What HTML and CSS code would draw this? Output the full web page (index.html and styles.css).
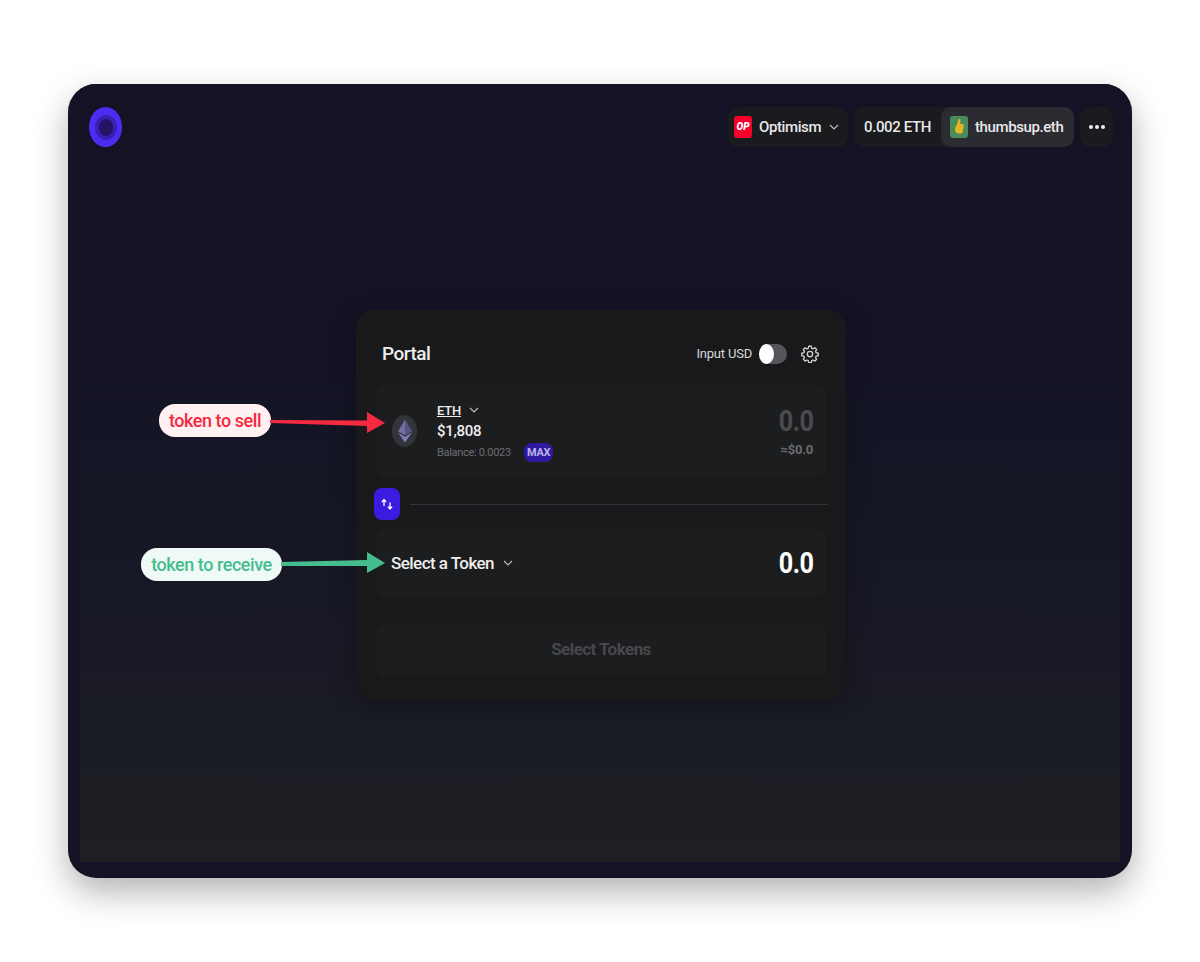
FILE: index.html
```html
<!DOCTYPE html>
<html lang="en">
<head>
  <meta charset="UTF-8">
  <title>Portal</title>
  <link rel="stylesheet" href="styles.css">
</head>
<body>

<div class="window">
  <div class="inner">
    <header class="topbar">
      <div class="logo"><span class="logo-core"></span></div>
      <div class="top-actions">
        <div class="pill network">
          <span class="op-badge">OP</span>
          <span>Optimism</span>
          <svg class="chev" width="12" height="12" viewBox="0 0 12 12"><path d="M2 4l4 4 4-4" /></svg>
        </div>
        <div class="pill wallet">
          <span class="balance">0.002 ETH</span>
          <div class="account">
            <span class="avatar">
              <svg width="18" height="22" viewBox="0 0 18 22">
                <path d="M8.500 3.500c.8-.8 2-.3 1.900 1l-.2 3.500h2.300c1 0 1.400.8 1.200 1.600l-1 6.400c-.2 1-1 1.500-2 1.500H8c-1 0-1.500-.5-2-1.200-.6-.7-1-2-1-3.300 0-2 1.300-3 2-4.500.5-1.500.8-3.500 1.500-5z" fill="#e6b422" />
              </svg>
            </span>
            <span>thumbsup.eth</span>
          </div>
        </div>
        <div class="pill more">
          <span class="dot"></span><span class="dot"></span><span class="dot"></span>
        </div>
      </div>
    </header>

    <main class="stage">
      <section class="card">
        <div class="card-head">
          <h1>Portal</h1>
          <div class="card-tools">
            <span class="input-usd">Input USD</span>
            <span class="toggle"><span class="knob"></span></span>
            <svg class="gear" width="18" height="18" viewBox="0 0 24 24">
              <path d="M10.300 1.600h3.400l.6 2.800 1.800.8 2.400-1.500 2.400 2.400-1.500 2.400.8 1.800 2.800.6v3.400l-2.800.6-.8 1.800 1.500 2.400-2.400 2.400-2.400-1.500-1.800.8-.6 2.800h-3.400l-.6-2.800-1.800-.8-2.400 1.500-2.400-2.400 1.500-2.400-.8-1.800-2.800-.6v-3.400l2.800-.6.8-1.800-1.500-2.400 2.400-2.400 2.400 1.500 1.800-.8z" />
              <circle cx="12" cy="12" r="3.600" />
            </svg>
          </div>
        </div>

        <div class="token-row sell">
          <div class="token-left">
            <span class="eth-icon">
              <svg width="14" height="24" viewBox="0 0 16 26">
                <path d="M8 0L0 13.200l8 4.700 8-4.700z" fill="#6f6fa6" />
                <path d="M8 0v17.900l8-4.700z" fill="#55557f" />
                <path d="M0 14.800L8 26l8-11.200-8 4.800z" fill="#7d7db5" />
              </svg>
            </span>
            <div class="token-info">
              <div class="token-name"><span class="symbol">ETH</span>
                <svg class="chev" width="12" height="12" viewBox="0 0 12 12"><path d="M2 4l4 4 4-4" /></svg>
              </div>
              <div class="token-price">$1,808</div>
              <div class="token-balance"><span>Balance: 0.0023</span><span class="max">MAX</span></div>
            </div>
          </div>
          <div class="amount-box">
            <div class="amount muted">0.0</div>
            <div class="amount-usd">≈$0.0</div>
          </div>
        </div>

        <div class="switch-row">
          <span class="switch-btn">
            <svg width="14" height="14" viewBox="0 0 14 14">
              <path d="M4 9V3M1.900 5L4 2.600 6.100 5" />
              <path d="M10 5.500V12M7.900 9.600L10 12l2.100-2.400" />
            </svg>
          </span>
          <span class="switch-line"></span>
        </div>

        <div class="token-row receive">
          <div class="select-token">Select a Token
            <svg class="chev" width="12" height="12" viewBox="0 0 12 12"><path d="M2 4l4 4 4-4" /></svg>
          </div>
          <div class="amount">0.0</div>
        </div>

        <div class="submit">Select Tokens</div>
      </section>
    </main>
  </div>

  <div class="callout sell-callout">token to sell</div>
  <div class="callout receive-callout">token to receive</div>
  <svg class="arrows" width="1064" height="794" viewBox="0 0 1064 794">
    <path d="M202 336L299 336.500V328L317 339L299 349V342L202 339z" fill="#f5293f" />
    <path d="M213 478L299 476V468L317 479L299 489V482L213 482z" fill="#46bd8f" />
  </svg>
</div>

</body>
</html>
```

FILE: styles.css
```css
* {
  box-sizing: border-box;
}
body {
  margin: 0;
  height: 962px;
  padding: 84px 68px 84px;
  background-color: #fff;
  font-family: 'Roboto', sans-serif;
  color: #eee;
  overflow: hidden;
}
.window {
  position: relative;
  width: 1064px;
  height: 794px;
  padding: 0 12px 16px;
  border-radius: 28px;
  overflow: hidden;
  background-color: #131325;
  box-shadow: 0 14px 34px rgba(0, 0, 0, 0.3);
}
.inner {
  height: 100%;
  display: flex;
  flex-direction: column;
  background: linear-gradient(#131325 0%, #131325 35%, #191a25 75%, #1e2023 100%);
}

/* top bar */
.topbar {
  display: flex;
  justify-content: space-between;
  align-items: center;
  padding: 23px 7px 0 9px;
}
.logo {
  width: 33px;
  height: 40px;
  border-radius: 50%;
  background-color: #4c2cf0;
  display: flex;
  align-items: center;
  justify-content: center;
}
.logo-core {
  width: 14px;
  height: 17px;
  border-radius: 50%;
  background-color: #231563;
  box-shadow: 0 0 0 4px #3a1fb0;
}
.top-actions {
  display: flex;
  gap: 6px;
}
.pill {
  height: 40px;
  display: flex;
  align-items: center;
  border-radius: 10px;
  background-color: #1a1b1f;
  font-size: 15px;
  font-weight: 500;
  letter-spacing: -0.4px;
  color: #e8e8e8;
}
.network {
  width: 120px;
  padding-left: 6px;
  gap: 7px;
}
.op-badge {
  width: 18px;
  height: 22px;
  border-radius: 3px;
  background-color: #f5002c;
  color: #fff;
  font-size: 10px;
  font-weight: 900;
  font-style: italic;
  letter-spacing: 0;
  text-align: center;
  line-height: 22px;
}
.chev {
  fill: none;
  stroke: #bbb;
  stroke-width: 1.200;
}
.wallet {
  width: 220px;
}
.balance {
  width: 87px;
  text-align: center;
}
.account {
  flex: 1;
  height: 40px;
  display: flex;
  align-items: center;
  gap: 7px;
  padding-left: 9px;
  border-radius: 10px;
  background-color: #2b2c31;
}
.avatar {
  width: 18px;
  height: 22px;
  border-radius: 3px;
  background-color: #4a8b5c;
  display: block;
}
.avatar svg {
  display: block;
}
.more {
  width: 33px;
  justify-content: center;
  gap: 2px;
}
.dot {
  width: 4px;
  height: 4px;
  border-radius: 50%;
  background-color: #eee;
}

/* swap card */
.stage {
  display: flex;
  justify-content: center;
  padding-top: 163px;
  padding-left: 2px;
}
.card {
  width: 490px;
  height: 390px;
  padding: 0 20px;
  border-radius: 18px;
  background-color: #19191b;
  box-shadow: 0 8px 26px rgba(0, 0, 0, 0.28);
}
.card-head {
  height: 75px;
  display: flex;
  justify-content: space-between;
  align-items: center;
  padding: 12px 7px 0 6px;
}
h1 {
  margin: 0;
  font-size: 19px;
  font-weight: 500;
  letter-spacing: -0.5px;
  color: #eee;
}
.card-tools {
  display: flex;
  align-items: center;
}
.input-usd {
  font-size: 13px;
  letter-spacing: -0.2px;
  color: #d8d8d8;
  margin-right: 7px;
}
.toggle {
  width: 28px;
  height: 20px;
  border-radius: 10px;
  background-color: #55565a;
  margin-right: 14px;
}
.knob {
  display: block;
  width: 15px;
  height: 20px;
  border-radius: 50%;
  background-color: #fff;
}
.gear {
  fill: none;
  stroke: #cfcfcf;
  stroke-width: 1.800;
  stroke-linejoin: round;
}
.token-row {
  height: 92px;
  display: flex;
  justify-content: space-between;
  align-items: center;
  padding: 0 12px 0 16px;
  border-radius: 8px;
  background-color: #1c1d1f;
}
.token-left {
  display: flex;
  align-items: center;
  gap: 20px;
}
.eth-icon {
  width: 25px;
  height: 32px;
  border-radius: 50%;
  background-color: #32343a;
  display: flex;
  align-items: center;
  justify-content: center;
}
.token-info {
  display: flex;
  flex-direction: column;
}
.token-name {
  display: flex;
  align-items: center;
  gap: 7px;
  height: 20px;
}
.symbol {
  font-size: 13px;
  font-weight: 500;
  letter-spacing: -0.2px;
  text-decoration: underline;
  color: #eee;
}
.token-price {
  font-size: 15px;
  font-weight: 500;
  letter-spacing: -0.3px;
  color: #eee;
  line-height: 22px;
}
.token-balance {
  display: flex;
  align-items: center;
  gap: 13px;
  font-size: 11px;
  letter-spacing: -0.3px;
  color: #6c6d71;
  margin-top: 1px;
}
.max {
  padding: 3px 3px;
  border-radius: 8px;
  background-color: #2e1aa0;
  color: #b9b3ee;
  font-size: 11px;
  font-weight: 700;
  letter-spacing: -0.2px;
}
.amount-box {
  display: flex;
  flex-direction: column;
  align-items: flex-end;
}
.amount {
  font-size: 30px;
  font-weight: 700;
  line-height: 32px;
  letter-spacing: -0.5px;
  color: #fff;
  transform: scaleX(0.84);
  transform-origin: right center;
}
.amount.muted {
  color: #4a4b4e;
}
.amount-usd {
  margin-top: 5px;
  margin-right: 1px;
  font-size: 13px;
  font-weight: 700;
  letter-spacing: -0.2px;
  color: #6b6c70;
}
.switch-row {
  height: 52px;
  padding-top: 2px;
  display: flex;
  align-items: center;
  gap: 10px;
  margin-left: -2px;
}
.switch-btn {
  width: 26px;
  height: 32px;
  flex: none;
  border-radius: 8px;
  background-color: #3a1ce0;
  display: flex;
  align-items: center;
  justify-content: center;
}
.switch-btn svg {
  fill: none;
  stroke: #fff;
  stroke-width: 1.300;
}
.switch-line {
  flex: 1;
  height: 1px;
  margin-right: -2px;
  background-color: #333438;
}
.receive {
  height: 68px;
  padding-left: 15px;
}
.select-token {
  display: flex;
  align-items: center;
  gap: 8px;
  font-size: 17px;
  font-weight: 500;
  letter-spacing: -0.55px;
  color: #eee;
}
.submit {
  height: 52px;
  margin-top: 27px;
  padding-bottom: 2px;
  border-radius: 8px;
  background-color: #1c1d1f;
  display: flex;
  align-items: center;
  justify-content: center;
  font-size: 17px;
  font-weight: 700;
  letter-spacing: -0.55px;
  color: #47484c;
}

/* annotations */
.callout {
  position: absolute;
  height: 33px;
  border-radius: 16px;
  font-size: 18px;
  font-weight: 500;
  letter-spacing: -0.45px;
  line-height: 33px;
  text-align: center;
}
.sell-callout {
  left: 91px;
  top: 320px;
  width: 112px;
  background-color: #fff0f1;
  color: #f5293f;
}
.receive-callout {
  left: 73px;
  top: 464px;
  width: 141px;
  background-color: #effaf6;
  color: #46bd8f;
}
.arrows {
  position: absolute;
  left: 0;
  top: 0;
  pointer-events: none;
}
```
